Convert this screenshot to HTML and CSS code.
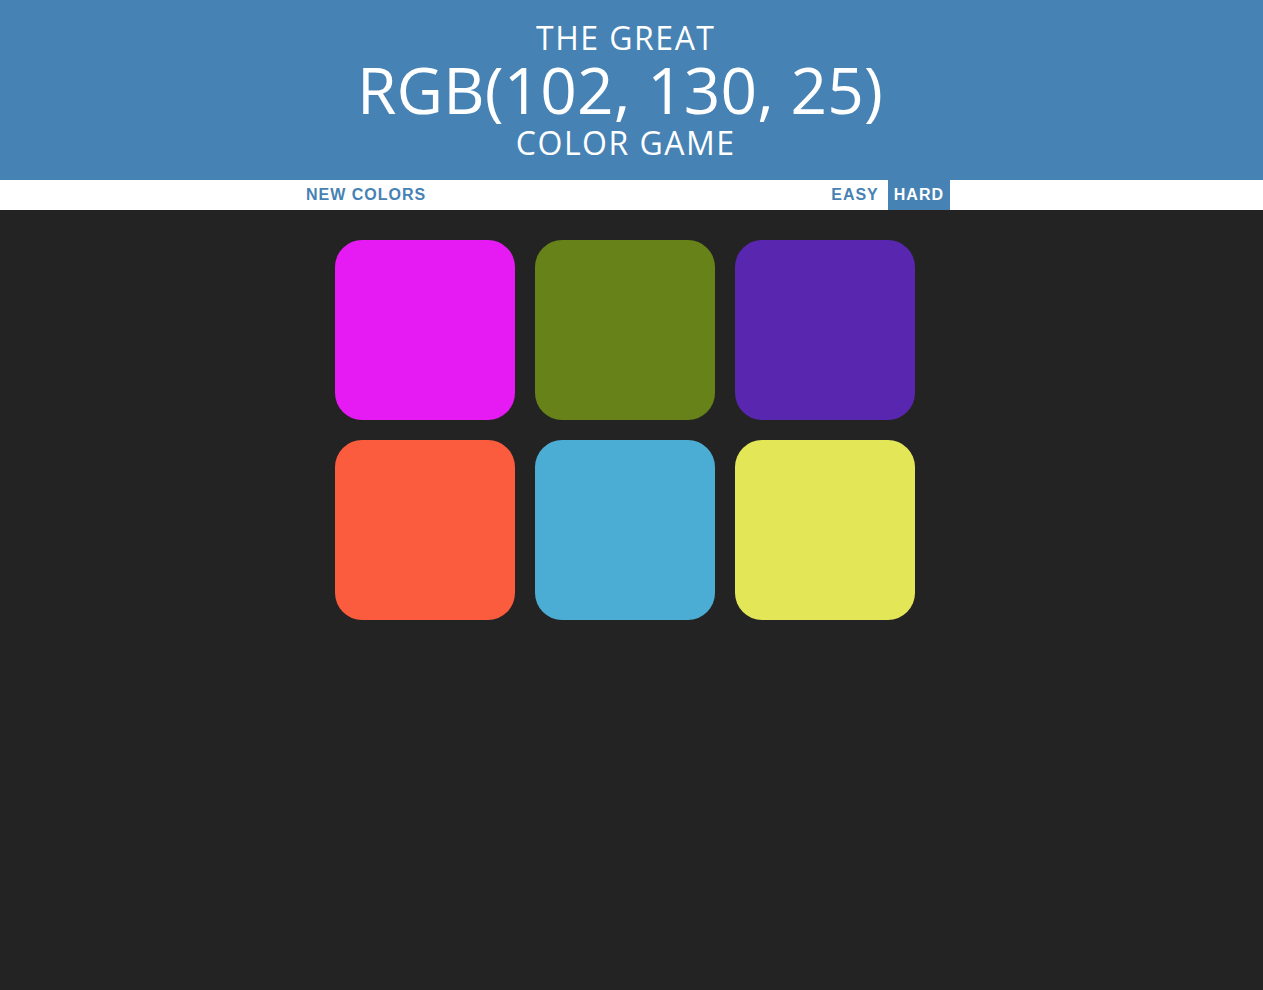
FILE: index.html
```html
<!DOCTYPE html>
<html lang="en">
<head>
<meta charset="utf-8">
<title>Color Game</title>
<link rel="stylesheet" href="styles.css">
</head>
<body>
  <header class="header">
    <div class="frame">
      <h1 class="title">
        <span class="title-line">The Great</span>
        <span class="title-rgb">RGB(102, 130, 25)</span>
        <span class="title-line">Color Game</span>
      </h1>
    </div>
  </header>
  <nav class="stripe">
    <div class="frame">
      <div class="stripe-inner">
        <button class="btn">New Colors</button>
        <div class="modes">
          <button class="btn">Easy</button>
          <button class="btn btn-selected">Hard</button>
        </div>
      </div>
    </div>
  </nav>
  <main class="frame">
    <div class="board">
      <div class="square sq-1"></div>
      <div class="square sq-2"></div>
      <div class="square sq-3"></div>
      <div class="square sq-4"></div>
      <div class="square sq-5"></div>
      <div class="square sq-6"></div>
    </div>
  </main>
</body>
</html>
```
FILE: styles.css
```css
html, body {
  margin: 0;
  padding: 0;
}
body {
  background: #232323;
  min-height: 990px;
  font-family: "Liberation Sans", Arial, sans-serif;
}
.frame {
  width: 1250px;
}
.header {
  background: #4682b4;
  color: #ffffff;
}
.title {
  margin: 0;
  padding: 20px 0;
  font-family: "Open Sans", "Liberation Sans", sans-serif;
  font-weight: 400;
  text-transform: uppercase;
  text-align: center;
  line-height: 1.1;
  font-size: 32px;
  display: flex;
  flex-direction: column;
  align-items: center;
}
.title-line {
  display: block;
  height: 35px;
  line-height: 35px;
  letter-spacing: 1.5px;
  padding-left: 1.5px;
}
.title-rgb {
  display: block;
  font-size: 64px;
  height: 70px;
  line-height: 70px;
  letter-spacing: 0.1px;
  padding-right: 10px;
}
.stripe {
  background: #ffffff;
  height: 30px;
}
.stripe-inner {
  width: 650px;
  height: 30px;
  margin: 0 auto;
  display: flex;
  justify-content: space-between;
}
.modes {
  display: flex;
  gap: 4px;
}
.btn {
  border: none;
  background: #ffffff;
  color: #4682b4;
  font-family: "Liberation Sans", Arial, sans-serif;
  font-weight: 700;
  font-size: 16px;
  letter-spacing: 1px;
  text-transform: uppercase;
  height: 30px;
  padding: 0 5px 0 6px;
  margin: 0;
  cursor: pointer;
}
.btn-selected {
  background: #4682b4;
  color: #ffffff;
  padding: 0 6px;
}
.board {
  width: 580px;
  margin: 30px auto 0;
  display: grid;
  grid-template-columns: repeat(3, 180px);
  gap: 20px;
}
.square {
  height: 180px;
  border-radius: 27px;
}
.sq-1 { background: rgb(230, 27, 244); }
.sq-2 { background: rgb(102, 130, 25); }
.sq-3 { background: rgb(89, 38, 176); }
.sq-4 { background: rgb(250, 92, 61); }
.sq-5 { background: rgb(75, 173, 211); }
.sq-6 { background: rgb(227, 231, 87); }
```
